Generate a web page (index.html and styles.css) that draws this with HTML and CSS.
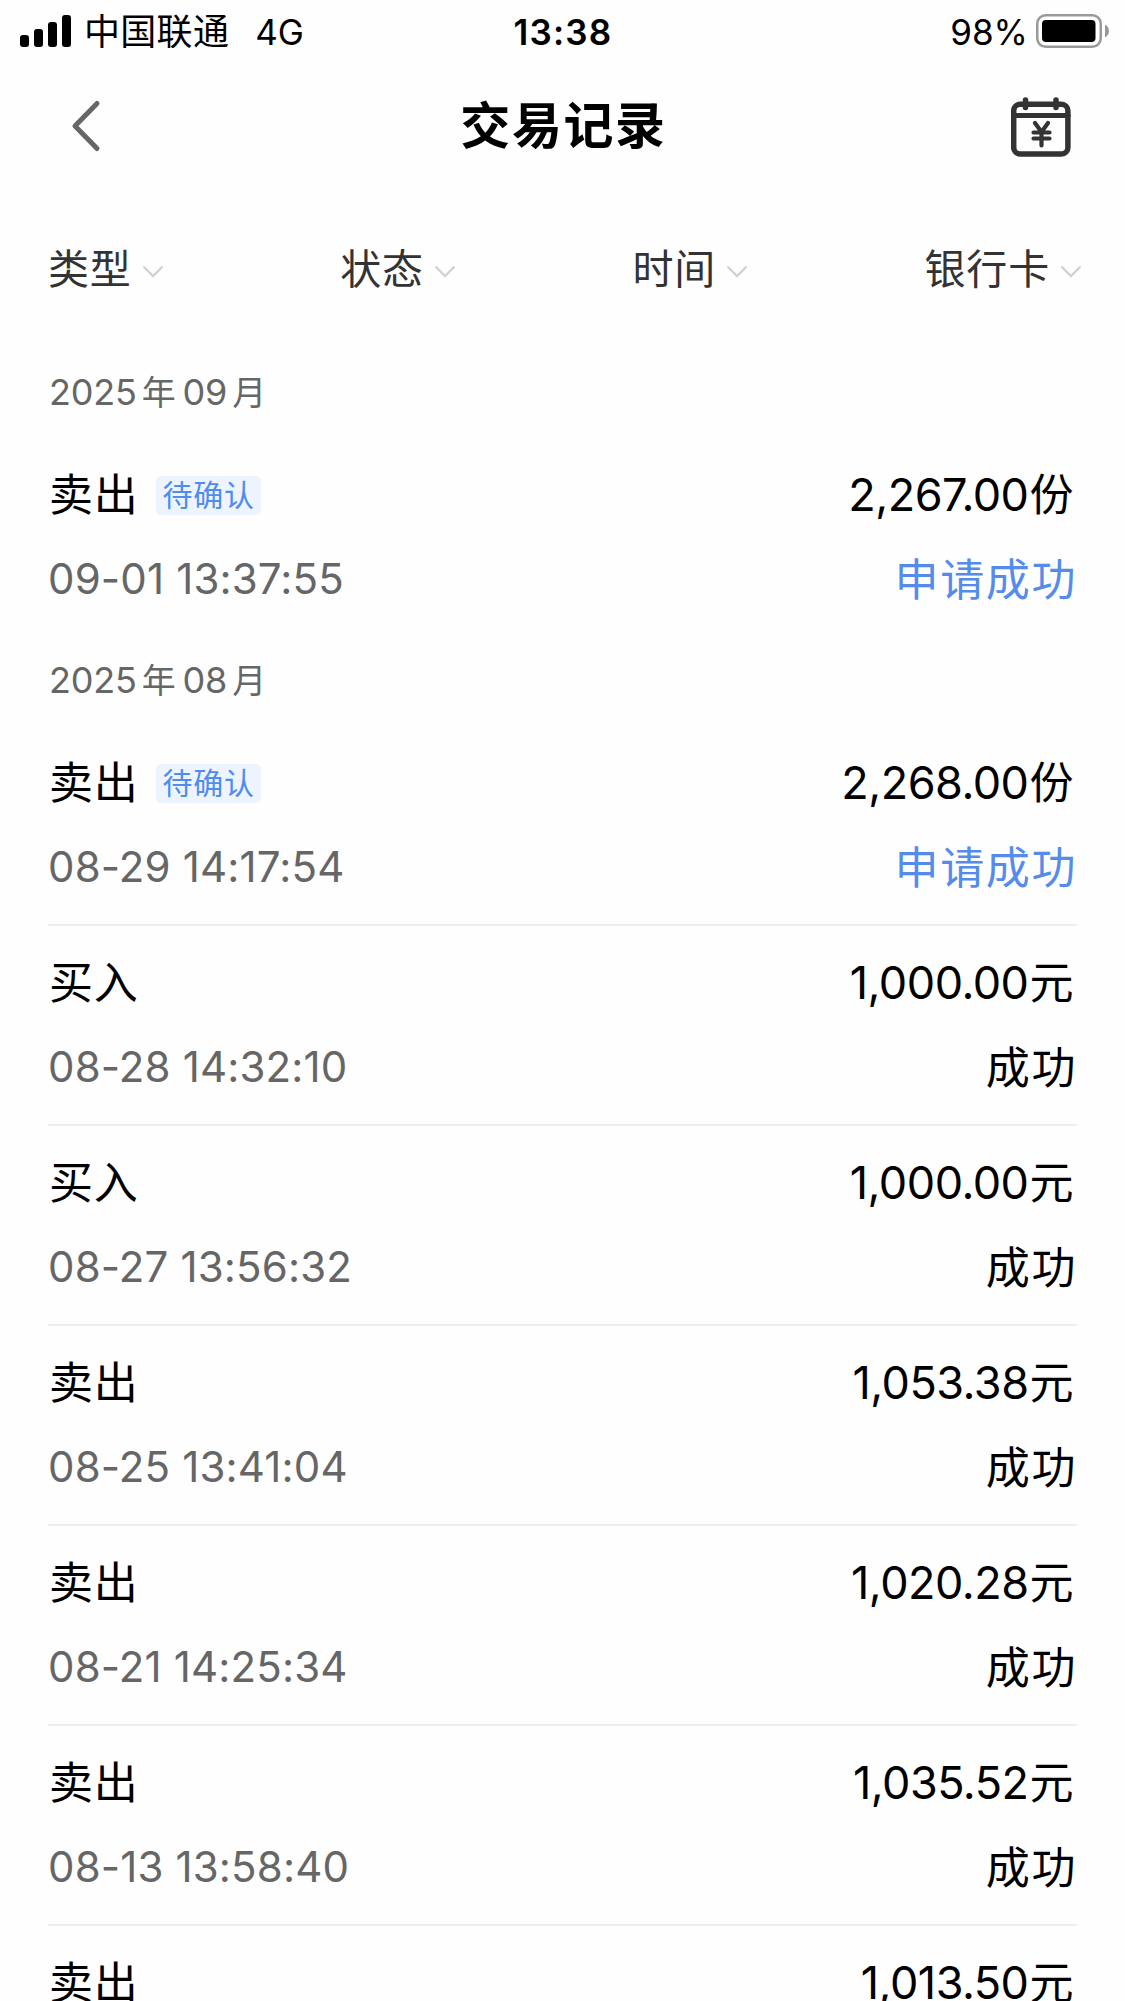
FILE: index.html
```html
<!DOCTYPE html>
<html lang="zh-CN">
<head>
<meta charset="utf-8">
<title>交易记录</title>
<link rel="stylesheet" href="styles.css">
</head>
<body>
<div class="status-bar">
  <div class="carrier">
    <svg class="signal" width="52" height="32" viewBox="0 0 52 32"><rect x="0" y="20" width="9" height="12" rx="3"/><rect x="14" y="14" width="9" height="18" rx="3"/><rect x="28" y="7" width="9" height="25" rx="3"/><rect x="42" y="0" width="9" height="32" rx="3"/></svg>
    <span class="carrier-name">中国联通</span>
    <span class="network">4G</span>
  </div>
  <div class="clock">13:38</div>
  <div class="battery">
    <span class="percent">98%</span>
    <svg width="73" height="34" viewBox="0 0 73 34"><rect x="1.250" y="1.250" width="63.500" height="31.500" rx="8.500" fill="none" stroke="#999" stroke-width="2.500"/><rect x="6" y="6" width="53.500" height="22" rx="4" fill="#000"/><path d="M69 10.500c5.300 2.500 5.300 10.500 0 13z" fill="#999"/></svg>
  </div>
</div>
<header class="nav">
  <svg class="back" width="32" height="56" viewBox="0 0 32 56"><path d="M28 5.500L6 28l22 22.500" fill="none" stroke="#666" stroke-width="5" stroke-linecap="round" stroke-linejoin="round"/></svg>
  <h1 class="title">交易记录</h1>
  <svg class="calendar" width="60" height="60" viewBox="0 0 60 60" fill="none" stroke="#333" stroke-linecap="round"><rect x="2.700" y="7.200" width="54.200" height="49.800" rx="6.500" stroke-width="5.500"/><path d="M3 18.500h54" stroke-width="5"/><path d="M14.500 3v7.500M45 3v7.500" stroke-width="5.500"/><path d="M24 26l6.500 9 6.500-9M30.500 35.500V48.500M22.500 35.500h16M22.500 41.500h16" stroke-width="4.200"/></svg>
</header>
<nav class="filters">
  <div class="filter"><span class="label">类型</span><svg class="arrow" viewBox="0 0 22 13"><path d="M1.500 1.500l9.500 9.500 9.500-9.500"/></svg></div>
  <div class="filter"><span class="label">状态</span><svg class="arrow" viewBox="0 0 22 13"><path d="M1.500 1.500l9.500 9.500 9.500-9.500"/></svg></div>
  <div class="filter"><span class="label">时间</span><svg class="arrow" viewBox="0 0 22 13"><path d="M1.500 1.500l9.500 9.500 9.500-9.500"/></svg></div>
  <div class="filter"><span class="label">银行卡</span><svg class="arrow" viewBox="0 0 22 13"><path d="M1.500 1.500l9.500 9.500 9.500-9.500"/></svg></div>
</nav>
<main class="records">
  <h2 class="month">2025<span class="unit">年</span>09<span class="unit">月</span></h2>
  <div class="record">
    <div class="line"><span class="kind">卖出<span class="tag">待确认</span></span><span class="amount">2,267.00<span class="cjk">份</span></span></div>
    <div class="line"><span class="time">09-01 13:37:55</span><span class="state pending">申请成功</span></div>
  </div>
  <h2 class="month">2025<span class="unit">年</span>08<span class="unit">月</span></h2>
  <div class="record">
    <div class="line"><span class="kind">卖出<span class="tag">待确认</span></span><span class="amount">2,268.00<span class="cjk">份</span></span></div>
    <div class="line"><span class="time">08-29 14:17:54</span><span class="state pending">申请成功</span></div>
  </div>
  <div class="record">
    <div class="line"><span class="kind">买入</span><span class="amount">1,000.00<span class="cjk">元</span></span></div>
    <div class="line"><span class="time">08-28 14:32:10</span><span class="state">成功</span></div>
  </div>
  <div class="record">
    <div class="line"><span class="kind">买入</span><span class="amount">1,000.00<span class="cjk">元</span></span></div>
    <div class="line"><span class="time">08-27 13:56:32</span><span class="state">成功</span></div>
  </div>
  <div class="record">
    <div class="line"><span class="kind">卖出</span><span class="amount">1,053.38<span class="cjk">元</span></span></div>
    <div class="line"><span class="time">08-25 13:41:04</span><span class="state">成功</span></div>
  </div>
  <div class="record">
    <div class="line"><span class="kind">卖出</span><span class="amount">1,020.28<span class="cjk">元</span></span></div>
    <div class="line"><span class="time">08-21 14:25:34</span><span class="state">成功</span></div>
  </div>
  <div class="record">
    <div class="line"><span class="kind">卖出</span><span class="amount">1,035.52<span class="cjk">元</span></span></div>
    <div class="line"><span class="time">08-13 13:58:40</span><span class="state">成功</span></div>
  </div>
  <div class="record">
    <div class="line"><span class="kind">卖出</span><span class="amount">1,013.50<span class="cjk">元</span></span></div>
  </div>
</main>
</body>
</html>
```
FILE: styles.css
```css
* { box-sizing: border-box; }
body {
  margin: 0;
  height: 2001px;
  overflow: hidden;
  background: #fefefe;
  color: #000;
  font-family: Inter, "Noto Sans CJK SC", sans-serif;
}
svg { display: block; flex: none; }

.status-bar {
  display: grid;
  grid-template-columns: 1fr auto 1fr;
  align-items: center;
  height: 60px;
  padding: 0 16px 0 20px;
  font-size: 35px;
  line-height: 60px;
}
.carrier { display: flex; align-items: center; }
.carrier-name { margin-left: 12px; padding-top: 2px; font-size: 36px; letter-spacing: .3px; }
.network { margin-left: 26px; padding-top: 1px; }
.clock { font-weight: 600; letter-spacing: 1.2px; padding: 1px 3px 0 0; }
.battery { display: flex; align-items: center; justify-content: flex-end; gap: 8px; }
.percent { padding-top: 1px; }

.nav {
  display: grid;
  grid-template-columns: 1fr auto 1fr;
  align-items: center;
  height: 130px;
  padding: 0 54px;
}
.back { margin-left: 15px; }
.title { margin: 0; padding-left: 2px; padding-top: 1px; font-size: 50px; font-weight: 700; letter-spacing: 1.6px; line-height: 130px; }
.calendar { justify-self: end; margin-top: 2px; }

.filters {
  display: flex;
  justify-content: space-between;
  align-items: center;
  height: 158px;
  padding: 2px 43px 0 48px;
}
.filter { display: flex; align-items: center; height: 60px; color: #333; font-size: 41px; line-height: 60px; letter-spacing: .8px; }
.label { padding-bottom: 2px; }
.arrow { width: 22px; height: 13px; margin: 2px 0 0 10px; fill: none; stroke: #d2d2d2; stroke-width: 2.4px; }

.records { padding: 0 48px; }
.month { margin: 0; height: 88px; padding-left: 1px; font-size: 36px; font-weight: 400; line-height: 88px; letter-spacing: -.2px; color: #666; }
.unit { margin: 0 7px 0 5px; font-size: 34px; }
.record { height: 200px; padding: 17px 0 15px; }
.record + .record { border-top: 2px solid #eee; padding-top: 15px; }
.record:last-child { height: 77px; padding-bottom: 0; overflow: hidden; }
.line { display: flex; justify-content: space-between; align-items: center; height: 84px; line-height: 84px; font-size: 44px; }
.kind { display: flex; align-items: center; padding-left: 1px; letter-spacing: .8px; }
.tag { height: 39px; margin-left: 17px; padding: 0 6px 0 7px; border-radius: 5px; background: #eef4fe; color: #4d8cf0; font-size: 30px; line-height: 38px; letter-spacing: .7px; }
.time { font-size: 42px; letter-spacing: .15px; color: #666; }
.amount { padding-right: 4px; font-size: 45px; letter-spacing: -.5px; }
.cjk { margin-left: 1px; font-size: 44px; }
.state { padding-top: 1px; letter-spacing: 1.6px; }
.pending { color: #558ceb; }
```
